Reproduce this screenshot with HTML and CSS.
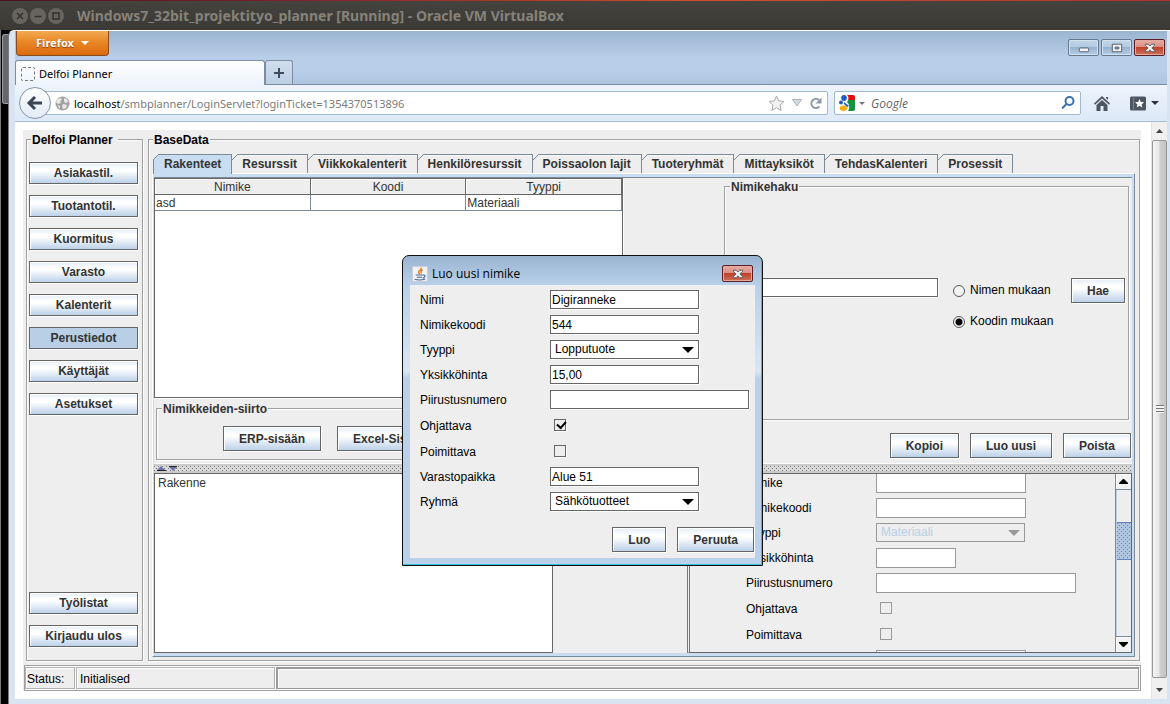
FILE: index.html
```html
<!DOCTYPE html>
<html lang="fi">
<head>
<meta charset="utf-8">
<title>Delfoi Planner</title>
<link rel="stylesheet" href="styles.css">
</head>
<body>
<header class="vm-bar">
  <button class="vm-btn" aria-label="Close VM"><svg viewBox="0 0 16 16"><path d="M5 5l6 6M11 5l-6 6"/></svg></button>
  <button class="vm-btn" aria-label="Minimise VM"><svg viewBox="0 0 16 16"><path d="M4.500 8.500h7"/></svg></button>
  <button class="vm-btn" aria-label="Maximise VM"><svg viewBox="0 0 16 16"><path d="M5 5h6v6H5z"/></svg></button>
  <span class="vm-title">Windows7_32bit_projektityo_planner [Running] - Oracle VM VirtualBox</span>
</header>
<div class="desktop">
  <div class="desk-edge"><div class="desk-window"></div></div>
  <div class="browser">
    <div class="browser-head">
      <div class="head-row">
        <button class="firefox">Firefox<span class="caret"></span></button>
        <div class="win-controls">
          <button class="win-btn" aria-label="Minimise"><svg viewBox="0 0 30 16"><rect x="10.500" y="8.500" width="10" height="4" rx="1"/></svg></button>
          <button class="win-btn" aria-label="Restore"><svg viewBox="0 0 30 16"><path fill-rule="evenodd" d="M10.500 4.500h10v8h-10zM13.500 7.500v2h4v-2z"/></svg></button>
          <button class="win-btn close" aria-label="Close"><svg viewBox="0 0 30 16"><path d="M10.500 4.500h3l2 2 2-2h3v1l-3 3 3 3v1h-3l-2-2-2 2h-3v-1l3-3-3-3z"/></svg></button>
        </div>
      </div>
      <div class="tab-strip">
        <div class="page-tab"><span class="fav"></span>Delfoi Planner</div>
        <button class="new-tab" aria-label="New tab"><svg viewBox="0 0 12 12"><path d="M6 1v10M1 6h10"/></svg></button>
      </div>
    </div>
    <nav class="toolbar">
      <button class="back" aria-label="Back"><svg viewBox="0 0 20 20"><path d="M10 4l-6 6 6 6M5 10h12"/></svg></button>
      <div class="url-bar">
        <svg class="globe" viewBox="0 0 15 15"><circle cx="7.500" cy="7.500" r="7"/><path d="M2 3l4-1 1 2-2 1 1 2-3 1-2-2zM9 2l3 1 1 3-3 1-1-2zM8 8l4 1-1 3-3 1-1-3zM2 9l3 1v3z"/></svg>
        <div class="url" role="textbox" contenteditable="true" aria-label="Address"><b>localhost</b>/smbplanner/LoginServlet?loginTicket=1354370513896</div>
        <svg class="star" viewBox="0 0 17 17"><path d="M8.500 1l2.200 4.900 5.300.6-4 3.600 1.200 5.400-4.700-2.800-4.700 2.800L5 10.100 1 6.500l5.300-.6z"/></svg>
        <svg class="drop" viewBox="0 0 10 8"><path d="M.5 .5h9L5 7z"/></svg>
        <svg class="reload" viewBox="0 0 13 13"><path d="M10.500 9.500A4.600 4.600 0 1 1 10 3"/><path class="tip" d="M12.500 .5v6h-6z"/></svg>
      </div>
      <div class="search-bar">
        <svg class="google" viewBox="0 0 16 16"><path fill="#e80b0b" d="M8 0h6q2 0 2 2v4H9z"/><path fill="#10943c" d="M8 5h8v9q0 2-2 2H8z"/><path fill="#fff" d="M8 0q3 3 0 7 4 4 1 9H0V0z"/><ellipse fill="#1d5fc4" cx="5" cy="3" rx="2.800" ry="3"/><circle fill="#1d5fc4" cx="2" cy="7.500" r="2"/><path fill="#1d5fc4" d="M5 7l5 4-2 1-3-3z"/><ellipse fill="#f4ae17" cx="4.500" cy="13.300" rx="3.700" ry="2.700"/></svg>
        <span class="caret small"></span>
        <input class="search-input" type="text" placeholder="Google" aria-label="Search">
        <svg class="lens" viewBox="0 0 14 14"><circle cx="8.500" cy="5" r="4"/><path d="M5.500 8L1 12.500"/></svg>
      </div>
      <button class="tool" aria-label="Home"><svg viewBox="0 0 16 15"><path d="M8 0l8 7.500-1 1.200L8 2.500 1 8.700 0 7.500zM8 4l5.500 5v6H9.500v-5h-3v5h-4V9zM12 1h2v3l-2-2z"/></svg></button>
      <button class="tool marks" aria-label="Bookmarks"><svg viewBox="0 0 16 14"><rect width="16" height="14" rx="1.500"/><path class="line" d="M3.500 1v12"/><path class="cut" d="M9.500 2.500l1.300 3 3.200.3-2.400 2.100.7 3.100-2.800-1.700L6.700 11l.7-3.100L5 5.800l3.200-.3z"/></svg><span class="caret dark"></span></button>
    </nav>
    <div class="viewport">
      <main class="page">
        <div class="applet">
          <div class="workspace">
            <fieldset class="group side">
              <legend class="wide">Delfoi Planner</legend>
              <button class="jbtn">Asiakastil.</button>
              <button class="jbtn">Tuotantotil.</button>
              <button class="jbtn">Kuormitus</button>
              <button class="jbtn">Varasto</button>
              <button class="jbtn">Kalenterit</button>
              <button class="jbtn pressed">Perustiedot</button>
              <button class="jbtn">Käyttäjät</button>
              <button class="jbtn">Asetukset</button>
              <span class="spring"></span>
              <button class="jbtn">Työlistat</button>
              <button class="jbtn">Kirjaudu ulos</button>
            </fieldset>
            <fieldset class="group base">
              <legend>BaseData</legend>
              <div class="tabs" role="tablist">
                <button class="tab selected" role="tab" aria-selected="true">Rakenteet</button>
                <button class="tab" role="tab">Resurssit</button>
                <button class="tab" role="tab">Viikkokalenterit</button>
                <button class="tab" role="tab">Henkilöresurssit</button>
                <button class="tab" role="tab">Poissaolon lajit</button>
                <button class="tab" role="tab">Tuoteryhmät</button>
                <button class="tab" role="tab">Mittayksiköt</button>
                <button class="tab" role="tab">TehdasKalenteri</button>
                <button class="tab" role="tab">Prosessit</button>
              </div>
              <div class="tab-panel"><div class="split">
                <div class="upper">
                  <div class="left-col">
                    <div class="table-pane">
                      <table class="items">
                        <thead><tr><th>Nimike</th><th>Koodi</th><th>Tyyppi</th></tr></thead>
                        <tbody><tr><td>asd</td><td></td><td>Materiaali</td></tr></tbody>
                      </table>
                    </div>
                    <fieldset class="group transfer">
                      <legend class="soft">Nimikkeiden-siirto</legend>
                      <div class="transfer-row"><button class="jbtn tall">ERP-sisään</button><button class="jbtn tall">Excel-Sisään</button></div>
                    </fieldset>
                  </div>
                  <div class="right-col">
                    <fieldset class="group lookup">
                      <legend class="soft">Nimikehaku</legend>
                      <div class="lookup-row">
                        <input class="jfield grow" type="text" aria-label="Hakusana">
                        <div class="radios">
                          <label class="radio"><input type="radio" name="by">Nimen mukaan</label>
                          <label class="radio"><input type="radio" name="by" checked>Koodin mukaan</label>
                        </div>
                        <button class="jbtn tall">Hae</button>
                      </div>
                    </fieldset>
                    <div class="actions"><button class="jbtn tall">Kopioi</button><button class="jbtn tall">Luo uusi</button><button class="jbtn tall">Poista</button></div>
                  </div>
                </div>
                <div class="divider"><svg viewBox="0 0 20 5"><path d="M0 4l4-4 4 4zM12 1h8l-4 4z"/><path class="edge" d="M0 4.500h9M12 .5h8"/></svg></div>
                <div class="lower">
                  <div class="tree">Rakenne</div>
                  <div class="detail">
                    <div class="detail-view">
                      <div class="form">
                        <label for="d1">Nimike</label><input id="d1" class="jfield off" type="text">
                        <label for="d2">Nimikekoodi</label><input id="d2" class="jfield off" type="text">
                        <label for="d3">Tyyppi</label><span class="combo off"><select id="d3" disabled><option>Materiaali</option></select></span>
                        <label for="d4">Yksikköhinta</label><input id="d4" class="jfield off short" type="text">
                        <label for="d5">Piirustusnumero</label><input id="d5" class="jfield off long" type="text">
                        <label for="d6">Ohjattava</label><input id="d6" class="check off" type="checkbox" disabled>
                        <label for="d7">Poimittava</label><input id="d7" class="check off" type="checkbox" disabled>
                        <span></span><input class="jfield off" type="text" aria-label="Varastopaikka">
                      </div>
                    </div>
                    <div class="jscroll">
                      <button class="jarrow" aria-label="Scroll up"><svg viewBox="0 0 9 5"><path d="M4 0h1l4 4v1H0V4z"/></svg></button>
                      <div class="jtrack"><div class="jthumb"></div></div>
                      <button class="jarrow down" aria-label="Scroll down"><svg viewBox="0 0 9 5"><path d="M4 5h1l4-4V0H0v1z"/></svg></button>
                    </div>
                  </div>
                </div>
              </div></div>
            </fieldset>
          </div>
          <footer class="status">
            <span class="cell">Status:</span><span class="cell state">Initialised</span><span class="cell progress"></span>
          </footer>
        </div>
      </main>
      <div class="page-scroll">
        <button class="parrow" aria-label="Up"><svg viewBox="0 0 7 4"><path d="M0 4l3.500-4L7 4z"/></svg></button>
        <div class="pthumb"><span class="grip"></span></div>
        <button class="parrow" aria-label="Down"><svg viewBox="0 0 7 4"><path d="M0 0l3.500 4L7 0z"/></svg></button>
      </div>
    </div>
  </div>
</div>

<section class="dialog" role="dialog" aria-label="Luo uusi nimike">
  <div class="dialog-head">
    <svg class="java" viewBox="0 0 15 15"><rect x=".5" y=".5" width="14" height="14" fill="#f3f3f3" stroke="#c9ced6"/><path d="M8.500 1.500Q9 3 7 4.500T7.500 7.500M10 3.500Q7.500 5 8.800 7" stroke="#e8781c" stroke-width="1.300" fill="none"/><path d="M3.500 8.500h7M4.500 10.500h5M10.500 8.500q2.500 0 1.500 1.500t-2 1.200M2.500 12.500q5 1.500 10-.3" stroke="#44688c" fill="none"/></svg>
    <span class="dialog-title">Luo uusi nimike</span>
    <button class="win-btn close" aria-label="Sulje"><svg viewBox="0 0 30 16"><path d="M10.500 4.500h3l2 2 2-2h3v1l-3 3 3 3v1h-3l-2-2-2 2h-3v-1l3-3-3-3z"/></svg></button>
  </div>
  <div class="dialog-body">
    <div class="form">
      <label for="f1">Nimi</label><input id="f1" class="jfield" type="text" value="Digiranneke">
      <label for="f2">Nimikekoodi</label><input id="f2" class="jfield" type="text" value="544">
      <label for="f3">Tyyppi</label><span class="combo"><select id="f3"><option>Lopputuote</option></select></span>
      <label for="f4">Yksikköhinta</label><input id="f4" class="jfield" type="text" value="15,00">
      <label for="f5">Piirustusnumero</label><input id="f5" class="jfield long" type="text">
      <label for="f6">Ohjattava</label><input id="f6" class="check" type="checkbox" checked>
      <label for="f7">Poimittava</label><input id="f7" class="check" type="checkbox">
      <label for="f8">Varastopaikka</label><input id="f8" class="jfield" type="text" value="Alue 51">
      <label for="f9">Ryhmä</label><span class="combo"><select id="f9"><option>Sähkötuotteet</option></select></span>
    </div>
    <div class="dialog-actions"><button class="jbtn tall">Luo</button><button class="jbtn tall">Peruuta</button></div>
  </div>
</section>
</body>
</html>
```
FILE: styles.css
```css
* { box-sizing: border-box; }
body {
  margin: 0;
  height: 100vh;
  display: flex;
  flex-direction: column;
  overflow: hidden;
  position: relative;
  background: #000;
  color: #000;
  font: 12px/15px "Liberation Sans", Arial, sans-serif;
}
button, input, select { font: inherit; color: inherit; margin: 0; }
button { padding: 0; border: 0; background: none; }
svg { display: block; flex: none; }

/* virtual machine frame */
.vm-bar {
  flex: none;
  height: 30px;
  display: flex;
  align-items: center;
  gap: 2px;
  padding: 1px 12px 0;
  background: linear-gradient(90deg, #4a1020, #8c2430 30%, #d0502c 60%, #a83238) top / 100% 1px no-repeat, linear-gradient(#45433e, #3b3935);
}
.vm-btn { width: 16px; height: 16px; border-radius: 50%; background: #66645d; }
.vm-btn svg { width: 16px; height: 16px; fill: none; stroke: #33312d; stroke-width: 1.5; }
.vm-title { margin-left: 11px; font: bold 14px/20px "Noto Sans", sans-serif; color: #85827a; white-space: nowrap; }
.desktop { flex: 1; min-height: 0; display: flex; }
.desk-edge { width: 8px; padding: 4px 0 0 1px; border-left: 1px solid #777; }
.desk-window { height: 70px; background: #66676b; border: 1px solid #9a9da3; border-right: 0; border-radius: 3px 0 0 3px; }

/* browser */
.browser {
  flex: 1;
  min-width: 0;
  display: flex;
  flex-direction: column;
  padding: 0 3px 5px 6px;
  background: #d8e4f1;
  border-left: 1px solid #77797c;
  border-top: 1px solid #fff;
  border-top-left-radius: 6px;
}
.browser-head { background: linear-gradient(#9ab4d0, #b9cfe9 50%, #b9cfe9 75%, #adc5df); border-bottom: 1px solid #7d8ca1; }
.head-row { display: flex; justify-content: space-between; height: 29px; padding: 0 2px 0 1px; }
.firefox {
  width: 93px;
  height: 25px;
  display: flex;
  align-items: center;
  justify-content: center;
  gap: 7px;
  border: 1px solid #8a4a1e;
  border-top: 0;
  border-radius: 0 0 4px 4px;
  background: linear-gradient(#f2a951, #e88523 50%, #da6a10);
  color: #fff;
  font: bold 11px/16px "Noto Sans", sans-serif;
  text-shadow: 0 1px 1px #84400c;
}
.caret { border: 4px solid transparent; border-top-color: currentColor; border-bottom: 0; }
.caret.small { border-width: 3px; border-bottom: 0; color: #777; }
.caret.dark { color: #2c333c; }
.win-controls { display: flex; gap: 2px; padding-top: 8px; }
.win-btn {
  width: 31px;
  height: 17px;
  border: 1px solid #64788f;
  border-radius: 2px;
  background: linear-gradient(#c3d6ea, #b2c9e1 48%, #98b3cf 50%, #b4cde6);
  box-shadow: inset 0 0 0 1px #d5e3f1;
}
.win-btn svg { width: 29px; height: 15px; fill: #f5f5f5; stroke: #505a68; }
.win-btn.close { border-color: #5c1d24; background: linear-gradient(#e5aba2, #da8e83 48%, #bb4129 50%, #cf7059); box-shadow: inset 0 0 0 1px #e3aaa2; }
.tab-strip { display: flex; align-items: flex-end; height: 24px; }
.page-tab {
  width: 250px;
  height: 25px;
  margin-bottom: -1px;
  display: flex;
  align-items: center;
  gap: 4px;
  padding: 1px 5px 0;
  border: 1px solid #7d8ca1;
  border-bottom: 0;
  border-radius: 3px 3px 0 0;
  background: linear-gradient(#fff, #edf4fc);
  font: 11px/16px "Noto Sans", sans-serif;
}
.fav { width: 14px; height: 14px; border: 1px dashed #777; border-radius: 2px; }
.new-tab { width: 28px; height: 24px; display: flex; align-items: center; justify-content: center; border: 1px solid #7d8ca1; border-bottom: 0; border-radius: 3px 3px 0 0; background: linear-gradient(#cfdeee, #bccfe3); }
.new-tab svg { width: 12px; height: 12px; stroke: #404c5c; stroke-width: 2; }
.toolbar { flex: none; height: 37px; display: flex; align-items: center; padding: 0 8px 0 4px; background: linear-gradient(#edf4fc, #dce9f7); border-bottom: 1px solid #a8bdd1; }
.back { z-index: 1; width: 32px; height: 32px; display: flex; align-items: center; justify-content: center; flex: none; border: 1px solid #8496ac; border-radius: 50%; background: linear-gradient(#fff, #e2ebf6); }
.back svg { width: 20px; height: 20px; fill: none; stroke: #3b4654; stroke-width: 3; }
.url-bar, .search-bar { height: 24px; display: flex; align-items: center; border: 1px solid #a6b8cb; border-radius: 2px; background: #fff; }
.url-bar { flex: 1; min-width: 0; margin-left: -8px; padding: 0 5px 0 11px; }
.globe { width: 15px; height: 15px; fill: #a3a3a3; }
.globe path { fill: #e9e9e9; }
.url { flex: 1; min-width: 0; margin-left: 4px; padding-top: 1px; overflow: hidden; white-space: nowrap; color: #7c7c7c; font: 11px/16px "Noto Sans", sans-serif; }
.url b { font-weight: normal; color: #000; }
.star { width: 17px; height: 17px; fill: #f3f3f3; stroke: #aaa; }
.drop { width: 10px; height: 8px; margin: 0 7px; fill: #d5dbe2; stroke: #aab2bb; }
.reload { width: 13px; height: 13px; fill: none; stroke: #8d99a6; stroke-width: 2; }
.reload .tip { fill: #8d99a6; stroke: none; }
.search-bar { width: 247px; flex: none; margin-left: 6px; padding: 0 5px 0 4px; }
.google { width: 16px; height: 16px; margin-right: 4px; }
.search-input { flex: 1; min-width: 0; margin-left: 6px; padding: 1px 0 0; border: 0; outline: 0; font: italic 12px/16px "Open Sans", sans-serif; }
.search-input::placeholder { color: #666; opacity: 1; }
.lens { width: 14px; height: 14px; fill: none; stroke: #3a72ad; stroke-width: 2; }
.tool { display: flex; align-items: center; flex: none; margin-left: 13px; fill: #4c5560; }
.tool svg { width: 16px; height: 15px; }
.tool.marks { gap: 5px; margin: 0 0 0 20px; }
.marks .line { stroke: #7d8792; }
.marks .cut { fill: #fff; }
.viewport { flex: 1; min-height: 0; display: flex; background: #fff; }
.page { flex: 1; min-width: 0; display: flex; padding: 8px 10px 8px 8px; }
.page-scroll { width: 16px; display: flex; flex-direction: column; background: #f0f0f0; border-left: 1px solid #e2e2e2; }
.parrow { height: 18px; display: flex; align-items: center; justify-content: center; }
.parrow svg { width: 7px; height: 4px; fill: #444; }
.pthumb { flex: 1; display: flex; align-items: center; justify-content: center; border: 1px solid #979797; border-radius: 2px; background: linear-gradient(90deg, #f5f5f5, #e6e6e6 45%, #cfcfd2 55%, #c3c3c6); margin-bottom: 3px; }
.grip { width: 8px; height: 8px; background: repeating-linear-gradient(#777 0 1px, #f4f4f4 1px 3px); }

/* applet */
.applet { flex: 1; min-width: 0; display: flex; flex-direction: column; gap: 4px; padding-top: 2px; background: #eee; }
.workspace { flex: 1; min-height: 0; display: flex; gap: 5px; padding: 0 1px 0 3px; }
.group { min-width: 0; min-height: 0; margin: 0; padding: 0; display: flex; flex-direction: column; border: 1px solid #a0a0a0; box-shadow: inset 1px 1px #fff, 1px 1px #fff; }
legend { padding: 1px 1px 0; line-height: 14px; background: #eee; font-weight: bold; }
legend.wide { padding-right: 5px; }
legend.soft { margin-left: 5px; color: #333; }
.side { width: 117px; flex: none; padding: 15px 4px 13px 2px; }
.side .jbtn { flex: none; margin-bottom: 11px; }
.side .jbtn:last-child { margin-bottom: 0; }
.side legend { margin-left: 2px; }
.spring { flex: 1; }
.jbtn {
  height: 22px;
  padding: 1px 15px 0;
  border: 1px solid #666;
  background: linear-gradient(#e4edf7, #fff 30%, #fff 40%, #bcd1e8);
  box-shadow: inset 1px 1px #fff, 1px 1px #fff;
  color: #333;
  font-weight: bold;
  white-space: nowrap;
}
.jbtn.tall { height: 25px; flex: none; }
.jbtn.pressed { background: #b8cfe5; box-shadow: 1px 1px #fff; }
.base { flex: 1; padding: 7px 4px 3px 3px; }
.base > legend { margin-left: 1px; }
.tabs { display: flex; padding-left: 1px; }
.tab { position: relative; height: 19px; padding: 0 10px; border: 1px solid #7a8a99; border-width: 1px 1px 0 0; color: #333; font-weight: bold; white-space: nowrap; box-shadow: inset 0 1px #f8f8f8; }
.tab.selected { z-index: 1; height: 20px; margin-bottom: -1px; padding-bottom: 1px; border-left-width: 1px; background: #c8ddf2; box-shadow: none; }
.tab::before { content: ""; position: absolute; left: 0; top: -1px; width: 6px; height: 6px; background: linear-gradient(135deg, #eee 42%, #7a8a99 42% 56%, transparent 56%); }
.tab.selected::before { left: -1px; }
.tab-panel { flex: 1; min-height: 0; display: flex; padding: 3px 2px 3px 1px; border: 1px solid #fff; border-right-color: #7a8a99; border-bottom-color: #7a8a99; background: #c8ddf2; }
.split { flex: 1; min-width: 0; display: flex; flex-direction: column; border-top: 1px solid #7a8a99; background: #eee; }
.upper { flex: 1; min-height: 0; display: flex; border-bottom: 1px solid #fff; }
.left-col { width: 469px; flex: none; display: flex; flex-direction: column; }
.table-pane { flex: 1; min-height: 0; border: 1px solid #666; background: #fff; box-shadow: 1px 1px #fff; }
.items { width: 100%; border-collapse: separate; border-spacing: 0; table-layout: fixed; color: #333; }
.items th { height: 16px; padding: 1px 0 0; line-height: 14px; font-weight: normal; background: #eee; border: 1px solid #666; border-width: 0 1px 1px 0; box-shadow: inset 1px 1px #fff; }
.items td { height: 16px; padding: 1px 1px 0; line-height: 14px; border: 1px solid #7a8a99; border-width: 0 1px 1px 0; }
.transfer { height: 59px; flex: none; margin: 3px 2px; }
.transfer-row { display: flex; gap: 16px; padding: 10px 0 0 66px; }
.right-col { flex: 1; min-width: 0; display: flex; flex-direction: column; justify-content: space-between; margin-left: 101px; }
.lookup { height: 241px; flex: none; margin: 1px 3px 0 0; }
.lookup-row { display: flex; align-items: flex-start; padding: 84px 3px 0 10px; }
.radios { display: flex; flex-direction: column; gap: 16px; width: 118px; margin-left: 15px; padding-top: 5px; }
.radio { display: flex; align-items: center; gap: 5px; white-space: nowrap; }
.radio input { appearance: none; width: 12px; height: 12px; border: 1px solid #555; border-radius: 50%; background: #f4f4f4; }
.radio input:checked { background: radial-gradient(#000 0 3px, #f4f4f4 4px); }
.actions { display: flex; justify-content: flex-end; gap: 11px; padding: 0 1px 5px 0; }
.divider { flex: none; height: 9px; padding: 2px 3px; background: conic-gradient(at 1px 1px, transparent 75%, #777 0) 0 0 / 4px 4px, conic-gradient(at 1px 1px, transparent 75%, #777 0) 2px 2px / 4px 4px, #dadada; border: solid #ccc; border-width: 2px 0; padding: 0 3px; }
.divider svg { width: 20px; height: 5px; fill: #6f6fae; }
.divider .edge { stroke: #222; }
.lower { flex: none; height: 180px; display: flex; }
.tree { width: 399px; flex: none; padding: 2px 3px; border: 1px solid #666; background: #fff; color: #333; }
.detail { flex: 1; min-width: 0; display: flex; margin-left: 134px; border: 1px solid #666; border-left: 3px double #777; }
.detail-view { flex: 1; min-width: 0; overflow: hidden; }
.detail-view .form { margin-top: -4px; padding-left: 56px; }
.jscroll { width: 16px; flex: none; display: flex; flex-direction: column; border-left: 1px solid #7a8a99; }
.jarrow { height: 16px; display: flex; align-items: center; justify-content: center; border-bottom: 1px solid #7a8a99; background: #f2f2f2; box-shadow: inset 1px 1px #fff; }
.jarrow.down { border: 0; border-top: 1px solid #7a8a99; }
.jarrow svg { width: 9px; height: 5px; }
.jtrack { flex: 1; padding-top: 32px; border-left: 1px solid #b8cfe5; background: #eee; }
.jthumb { height: 38px; border: 1px solid #6382bf; border-width: 1px 0; background: conic-gradient(at 1px 1px, transparent 75%, #6382bf 0) 0 0 / 4px 4px, conic-gradient(at 1px 1px, transparent 75%, #6382bf 0) 2px 2px / 4px 4px, #b0c5df; }

/* forms */
.form { display: grid; grid-template-columns: 130px 1fr; grid-auto-rows: 25px; grid-template-rows: repeat(5, 25px) 26px 26px; align-items: center; }
.form label { padding-top: 2px; }
.jfield { width: 149px; height: 19px; padding: 1px 1px 0; border: 1px solid #666; border-radius: 0; outline: 0; background: #fff; box-shadow: 1px 1px #fff; }
.jfield.grow { flex: 1; width: auto; min-width: 0; }
.jfield.long { width: 199px; }
.jfield.off { width: 150px; height: 20px; border-color: #999; box-shadow: none; }
.jfield.off.short { width: 80px; }
.jfield.off.long { width: 200px; }
.combo { position: relative; width: 149px; height: 19px; }
.combo select { display: block; appearance: none; width: 100%; height: 100%; padding: 0 4px; border: 1px solid #666; border-radius: 0; background: #fff; box-shadow: 1px 1px #fff; opacity: 1; }
.combo::after { content: ""; position: absolute; right: 5px; top: 7px; border: 6px solid transparent; border-top-color: currentColor; border-bottom: 0; pointer-events: none; }
.combo.off { color: #999; }
.combo.off select { border-color: #999; background: #eee; color: #b8cfe5; box-shadow: none; }
.check { appearance: none; width: 12px; height: 12px; margin-left: 4px; border: 1px solid #666; background: #eee; box-shadow: 1px 1px #fff; }
.check.off { border-color: #999; box-shadow: none; }
.check:checked { position: relative; }
.check:checked::after { content: ""; position: absolute; left: 2px; top: 1px; width: 7px; height: 4px; border: 2px solid #000; border-width: 0 0 2px 2px; transform: rotate(-48deg); }

/* status bar */
.status { flex: none; height: 26px; display: flex; gap: 1px; margin-left: 1px; padding: 1px 1px 1px 0; border: 1px solid #a0a0a0; box-shadow: inset 1px 1px #fff; }
.cell { height: 22px; padding: 4px 1px 0; border: 1px solid #b0b0b0; box-shadow: inset 1px 1px #fff, 1px 1px #fff; width: 50px; }
.cell.state { width: 199px; padding-left: 3px; }
.cell.progress { flex: 1; border: 1px solid #999; border-width: 2px 1px 1px 2px; }

/* dialog window */
.dialog {
  position: absolute;
  z-index: 5;
  left: 402px;
  top: 255px;
  width: 361px;
  padding: 0 7px 7px 7px;
  border: 1px solid #111;
  border-radius: 7px 7px 0 0;
  background: linear-gradient(#9ab4d0, #b9d1ea 30px, #dbe6f3 115px, #b9d1ea 122px);
  box-shadow: inset -1px -1px #35c4dc;
}
.dialog-head { height: 29px; display: flex; align-items: center; padding: 6px 2px 0; }
.java { width: 16px; height: 16px; }
.dialog-title { flex: 1; margin-left: 4px; font: 12px/16px "Open Sans", sans-serif; }
.dialog-body { padding: 2px 1px 6px 10px; background: #eee; }
.dialog-actions { display: flex; justify-content: flex-end; gap: 11px; margin-top: 13px; }
```
